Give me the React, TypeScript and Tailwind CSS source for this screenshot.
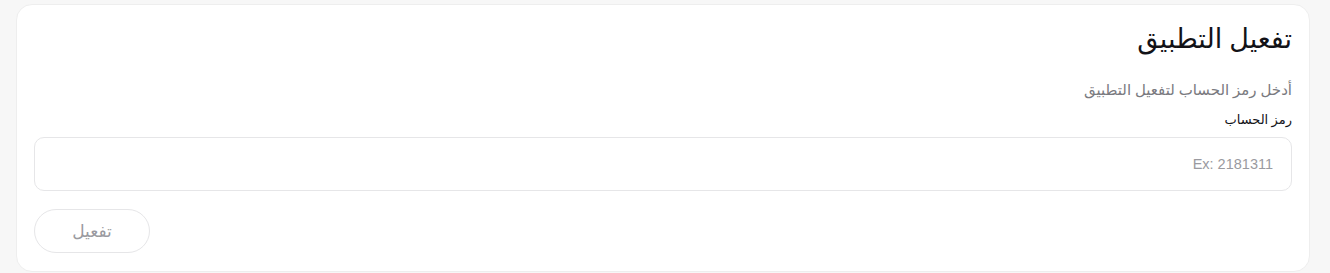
import { FC } from 'react';

const App: FC = () => {
  return (
    <div
      dir="rtl"
      className="min-h-screen bg-[#f7f7f7] pl-4 pr-5 pt-1"
      style={{ fontFamily: '"Noto Sans", "DejaVu Sans", sans-serif' }}
    >
      <div className="bg-white rounded-2xl border border-[#eeeeee] px-[17px] pt-[16px] pb-[18px]">
        <h1 className="text-[27px] leading-[34px] text-[#121217]">تفعيل التطبيق</h1>

        <p className="mt-[22px] text-[15px] leading-6 text-[#7a7a80]">
          أدخل رمز الحساب لتفعيل التطبيق
        </p>

        <label className="block mt-[8px] text-[13px] leading-5 text-[#121217]">
          رمز الحساب
        </label>

        <input
          dir="ltr"
          placeholder="Ex: 2181311"
          className="mt-[8px] w-full h-[54px] rounded-[10px] border border-[#e6e6e8] px-[18px] text-right text-[14.5px] placeholder:text-[#9a9aa0] outline-none"
          style={{ fontFamily: '"Liberation Sans", Arial, sans-serif' }}
        />

        <div className="flex mt-[18px]">
          <button
            className="mr-auto w-[116px] h-[44px] rounded-full border border-[#e6e6e8] text-[17px] text-[#9a9aa0] bg-white"
            disabled
          >
            تفعيل
          </button>
        </div>
      </div>
    </div>
  );
};

export default App;
